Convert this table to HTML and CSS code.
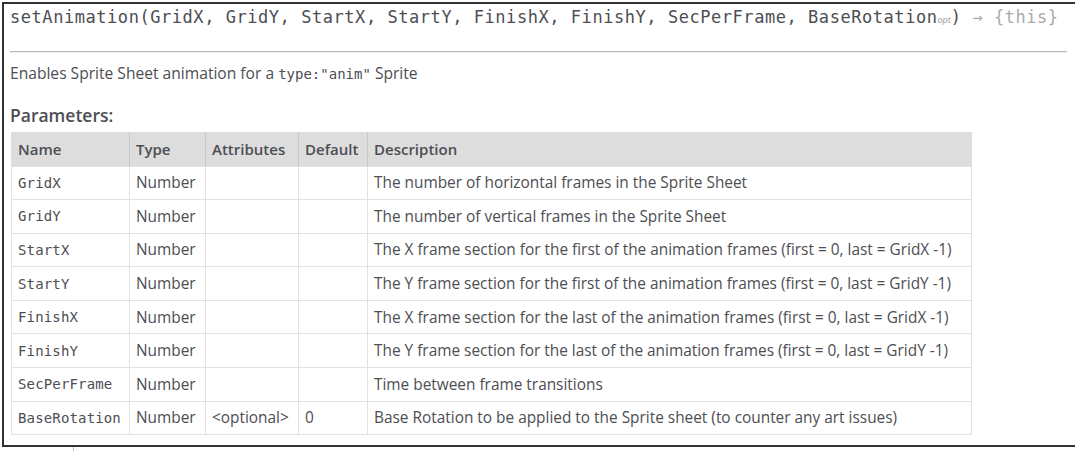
FILE: index.html
```html
<!DOCTYPE html>
<html>
<head>
<meta charset="utf-8">
<link rel="stylesheet" href="styles.css">
</head>
<body>
<div class="frame">
  <h4 class="sig">setAnimation(GridX, GridY, StartX, StartY, FinishX, FinishY, SecPerFrame, BaseRotation<span class="opt">opt</span>) <span class="ret">→ {this}</span></h4>
  <div class="rule"></div>
  <p class="desc">Enables Sprite Sheet animation for a <code>type:"anim"</code> Sprite</p>
  <h5 class="sub">Parameters:</h5>
  <table class="params">
    <colgroup>
      <col class="c-name"><col class="c-type"><col class="c-attr"><col class="c-def"><col class="c-desc">
    </colgroup>
    <thead>
      <tr><th>Name</th><th>Type</th><th>Attributes</th><th>Default</th><th>Description</th></tr>
    </thead>
    <tbody>
      <tr><td class="nm">GridX</td><td>Number</td><td></td><td></td><td>The number of horizontal frames in the Sprite Sheet</td></tr>
      <tr><td class="nm">GridY</td><td>Number</td><td></td><td></td><td>The number of vertical frames in the Sprite Sheet</td></tr>
      <tr><td class="nm">StartX</td><td>Number</td><td></td><td></td><td>The X frame section for the first of the animation frames (first = 0, last = GridX -1)</td></tr>
      <tr><td class="nm">StartY</td><td>Number</td><td></td><td></td><td>The Y frame section for the first of the animation frames (first = 0, last = GridY -1)</td></tr>
      <tr><td class="nm">FinishX</td><td>Number</td><td></td><td></td><td>The X frame section for the last of the animation frames (first = 0, last = GridX -1)</td></tr>
      <tr><td class="nm">FinishY</td><td>Number</td><td></td><td></td><td>The Y frame section for the last of the animation frames (first = 0, last = GridY -1)</td></tr>
      <tr><td class="nm">SecPerFrame</td><td>Number</td><td></td><td></td><td>Time between frame transitions</td></tr>
      <tr><td class="nm">BaseRotation</td><td>Number</td><td>&lt;optional&gt;</td><td>0</td><td>Base Rotation to be applied to the Sprite sheet (to counter any art issues)</td></tr>
    </tbody>
  </table>
</div>
<div class="tick"></div>
</body>
</html>
```
FILE: styles.css
```css
html, body {
  margin: 0;
  padding: 0;
  background: #ffffff;
}
body {
  font-family: "Open Sans", "Liberation Sans", sans-serif;
  color: #4d4e53;
}
.frame {
  margin: 2px 0 0 2px;
  width: 1065px;
  height: 441px;
  border: 2px solid #333;
  padding: 0 0 0 6px;
  box-sizing: content-box;
  overflow: hidden;
}
.sig {
  margin: 1px 0 0 0;
  font-family: "DejaVu Sans Mono", "Liberation Mono", monospace;
  font-size: 17px;
  letter-spacing: 0.55px;
  line-height: 24px;
  font-weight: normal;
  color: #4d4e53;
  white-space: nowrap;
}
.opt {
  font-family: "Open Sans", sans-serif;
  font-style: italic;
  font-size: 9px;
  letter-spacing: 0;
  color: #999;
}
.ret {
  color: #aaa;
}
.rule {
  margin: 19px 8px 0 0;
  border-top: 1px solid #bbb;
  height: 1px;
  background: #eee;
}
.desc {
  margin: 10px 0 0 0;
  font-size: 15.6px;
  line-height: 20px;
}
.desc code {
  font-family: "DejaVu Sans Mono", monospace;
  font-size: 14px;
}
.sub {
  margin: 19px 0 0 0;
  font-size: 17.5px;
  font-weight: 600;
  line-height: 24px;
}
.params {
  margin: 5px 0 0 1px;
  border-collapse: collapse;
  table-layout: fixed;
  width: 960px;
  font-size: 15.4px;
}
.c-name { width: 118px; }
.c-type { width: 76px; }
.c-attr { width: 93px; }
.c-def { width: 69px; }
.c-desc { width: 604px; }
.params th {
  background: #ddd;
  text-align: left;
  font-weight: 600;
  font-size: 15px;
  height: 34px;
  padding: 0 6px;
  border-left: 1px solid #c8c8c8;
  box-sizing: border-box;
}
.params th:first-child { border-left: 1px solid #ddd; }
.params td {
  height: 33.6px;
  padding: 0 6px;
  border: 1px solid #e2e2e2;
  box-sizing: border-box;
  white-space: nowrap;
}
.params td.nm {
  font-family: "DejaVu Sans Mono", monospace;
  font-size: 14px;
  letter-spacing: 0.15px;
}
.tick {
  margin-left: 73px;
  width: 1px;
  height: 4px;
  background: #bbb;
}
```
